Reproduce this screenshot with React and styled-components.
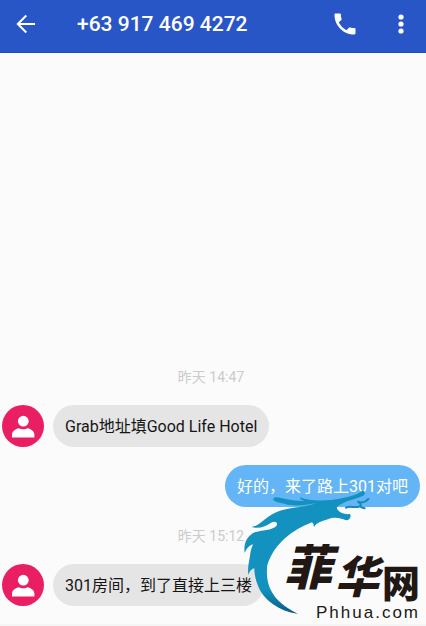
import React from "react";
import styled, { createGlobalStyle } from "styled-components";

const GlobalStyle = createGlobalStyle`
  * { box-sizing: border-box; }
  body {
    margin: 0;
    background: #fbfbfb;
    font-family: Roboto, "Noto Sans CJK SC", sans-serif;
  }
`;

const Screen = styled.div`
  position: relative;
  display: flex;
  flex-direction: column;
  min-height: 100vh;
  border-bottom: 2px solid #f5f5f5;
`;

const Header = styled.header`
  display: flex;
  align-items: center;
  height: 53px;
  padding: 0 21px 4px 14px;
  background: #2956c6;
  border-bottom: 1px solid #1e4dbb;
  color: #fff;
`;

const Title = styled.h1`
  flex: 1;
  margin: 0 0 0 39px;
  font-size: 21px;
  line-height: 28px;
  font-weight: 500;
`;

const IconButton = styled.button`
  display: flex;
  align-items: center;
  justify-content: center;
  width: ${(p) => p.$width}px;
  height: 40px;
  padding: 0;
  border: 0;
  background: none;
  color: inherit;
  cursor: pointer;
`;

const Actions = styled.div`
  display: flex;
  gap: 38px;
`;

const Thread = styled.main`
  flex: 1;
  display: flex;
  flex-direction: column;
  justify-content: flex-end;
  padding: 0 6px 18px 2px;
`;

const Time = styled.time`
  align-self: center;
  margin: 18px 0 17px;
  font-size: 14px;
  line-height: 22px;
  color: #cbcbcb;
`;

const Row = styled.div`
  display: flex;
  gap: 9px;
  justify-content: ${(p) => (p.$sent ? "flex-end" : "flex-start")};
  margin-top: ${(p) => (p.$sent ? 18 : 0)}px;
`;

const Avatar = styled.div`
  display: flex;
  align-items: center;
  justify-content: center;
  width: 42px;
  height: 42px;
  border-radius: 50%;
  background: #e91e63;
`;

const Bubble = styled.p`
  margin: 0;
  padding: 10px 12px 8px;
  border-radius: 22px;
  font-size: 16px;
  line-height: 24px;
  background: ${(p) => (p.$sent ? "#64b5f6" : "#e5e5e5")};
  color: ${(p) => (p.$sent ? "#fff" : "#151515")};
`;

const Watermark = styled.div`
  position: absolute;
  right: 6px;
  bottom: 0;
  width: 178px;
  height: 136px;
  pointer-events: none;
  color: #211815;
`;

const Dragon = styled.svg`
  position: absolute;
  left: 0;
  top: 0;
`;

const Brand = styled.div`
  position: absolute;
  right: 0;
  bottom: 0;
  display: flex;
  flex-direction: column;
  align-items: flex-end;
`;

const BrandName = styled.div`
  display: flex;
  align-items: flex-end;
  gap: 3px;
`;

const BrandChar = styled.span`
  font-family: "Noto Sans CJK SC", sans-serif;
  font-weight: 900;
  font-size: ${(p) => p.$size}px;
  line-height: ${(p) => p.$line}px;
  font-style: ${(p) => (p.$slanted ? "italic" : "normal")};
`;

const BrandUrl = styled.span`
  font-family: "Liberation Sans", sans-serif;
  font-size: 17px;
  line-height: 22px;
  letter-spacing: 2px;
`;

const PersonAvatar = () => (
  <Avatar>
    <svg width="24" height="24" viewBox="0 0 24 24" fill="#fff" aria-hidden="true">
      <circle cx="12.3" cy="7.2" r="5.4" />
      <path d="M1 23.5v-2.8C1 17 4.5 15 8 14.2c2 1.4 6.4 1.4 8.4 0 3.6.8 7 2.8 7 6.5v2.8z" />
    </svg>
  </Avatar>
);

const Received = ({ children }) => (
  <Row>
    <PersonAvatar />
    <Bubble>{children}</Bubble>
  </Row>
);

export default function App() {
  return (
    <>
      <GlobalStyle />
      <Screen>
        <Header>
          <IconButton $width={24} aria-label="Back">
            <svg width="20" height="20" viewBox="0 0 20 20" fill="none" stroke="#fff" strokeWidth="2">
              <path d="M19 10H2M10.3 1.5 1.8 10l8.5 8.5" />
            </svg>
          </IconButton>
          <Title>+63 917 469 4272</Title>
          <Actions>
            <IconButton $width={28} aria-label="Call">
              <svg width="28" height="28" viewBox="0 0 24 24" fill="#fff">
                <path d="M6.62 10.79a15.15 15.15 0 0 0 6.59 6.59l2.2-2.2a1 1 0 0 1 1.02-.24c1.12.37 2.33.57 3.57.57.55 0 1 .45 1 1V20c0 .55-.45 1-1 1C10.61 21 3 13.39 3 4c0-.55.45-1 1-1h3.5c.55 0 1 .45 1 1 0 1.25.2 2.45.57 3.57a1 1 0 0 1-.25 1.02z" />
              </svg>
            </IconButton>
            <IconButton $width={8} aria-label="More options">
              <svg width="8" height="22" viewBox="0 0 8 22" fill="#fff">
                <circle cx="4" cy="4" r="2.6" />
                <circle cx="4" cy="11" r="2.6" />
                <circle cx="4" cy="18" r="2.6" />
              </svg>
            </IconButton>
          </Actions>
        </Header>
        <Thread>
          <Time>昨天 14:47</Time>
          <Received>Grab地址填Good Life Hotel</Received>
          <Row $sent>
            <Bubble $sent>好的，来了路上301对吧</Bubble>
          </Row>
          <Time>昨天 15:12</Time>
          <Received>301房间，到了直接上三楼</Received>
        </Thread>
        <Watermark>
          <Dragon width="129" height="126" viewBox="78 99 387 378" aria-hidden="true">
            <defs>
              <linearGradient id="tail" x1="0" y1="0" x2="0" y2="1">
                <stop offset="0.8" stopColor="#1492bf" />
                <stop offset="1" stopColor="#075b86" />
              </linearGradient>
            </defs>
            <path
              fill="url(#tail)"
              d="M246 476C190 470 140 432 126 392C118 374 115 355 115 340C106 342 100 350 97 360C94 335 100 318 102 302C103 290 106 280 111 268C101 270 92 279 86 294C82 265 93 243 116 232C136 226 168 226 181 213C187 203 178 197 165 203C150 214 130 222 107 216C134 212 150 181 190 168C225 156 265 158 300 144C270 152 240 153 215 149C197 143 176 144 171 133C174 125 185 126 195 129C220 135 240 138 266 138C256 135 251 132 252 127C275 137 310 138 345 135C385 130 422 123 440 106C449 110 448 120 440 123C420 132 395 136 377 147C364 153 360 157 364 163C372 175 388 179 402 177C408 186 399 197 390 196C375 188 350 185 338 192C318 198 302 202 294 216C293 208 291 204 288 202C232 223 175 265 154 330C145 400 180 445 246 476Z"
            />
            <path
              fill="none"
              stroke="#1689b8"
              strokeWidth="6"
              strokeLinecap="round"
              d="M390 158C403 150 417 161 431 154C441 148 428 143 425 139C436 145 449 141 457 132M431 154C436 157 440 160 446 160"
            />
          </Dragon>
          <Brand>
            <BrandName>
              <BrandChar $size={48} $line={76} $slanted>菲</BrandChar>
              <BrandChar $size={44} $line={56} $slanted>华</BrandChar>
              <BrandChar $size={38} $line={42}>网</BrandChar>
            </BrandName>
            <BrandUrl>Phhua.com</BrandUrl>
          </Brand>
        </Watermark>
      </Screen>
    </>
  );
}
